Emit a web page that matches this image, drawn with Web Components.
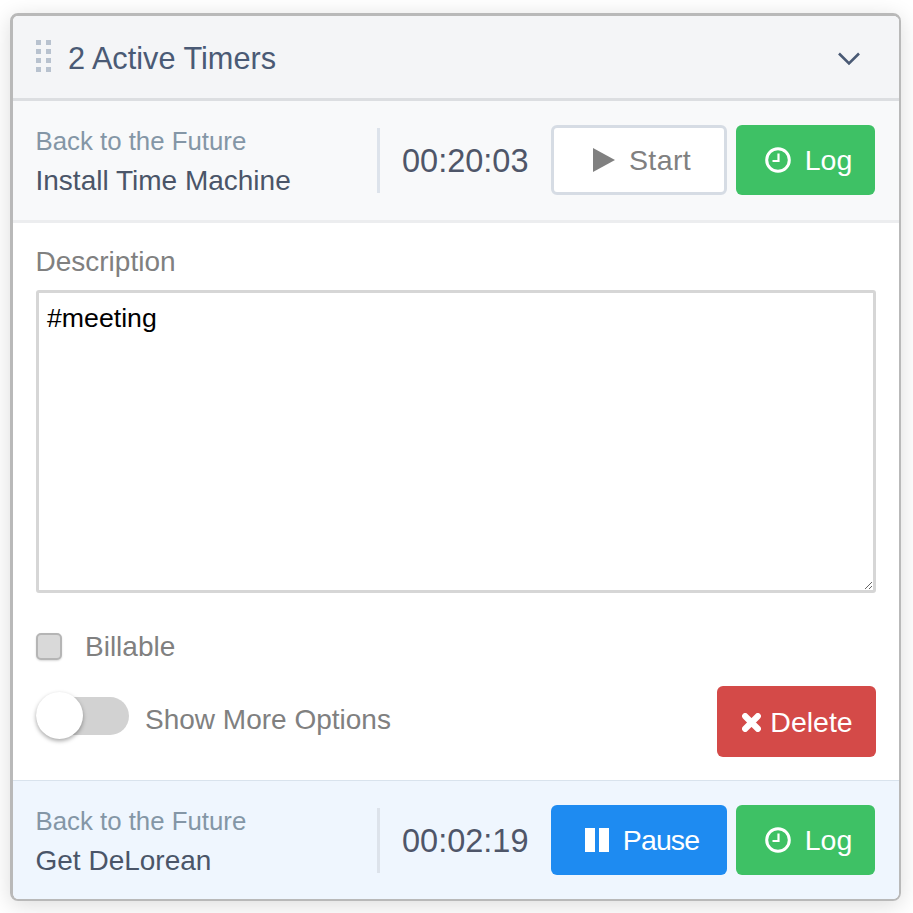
<!DOCTYPE html>
<html lang="en">
<head>
<meta charset="utf-8">
<title>Active Timers</title>
<style>
  html, body { margin: 0; background: #fff; }
  body { font-family: "Liberation Sans", Arial, sans-serif; min-height: 913px; }
</style>
</head>
<body>
<timer-panel title-text="2 Active Timers">
  <timer-row project="Back to the Future" task="Install Time Machine" time="00:20:03">
    <timer-button kind="outline" icon="play" slot="actions">Start</timer-button>
    <timer-button kind="green" icon="clock" slot="actions">Log</timer-button>
  </timer-row>
  <timer-details description="#meeting"></timer-details>
  <timer-row active project="Back to the Future" task="Get DeLorean" time="00:02:19">
    <timer-button kind="blue" icon="pause" slot="actions">Pause</timer-button>
    <timer-button kind="green" icon="clock" slot="actions">Log</timer-button>
  </timer-row>
</timer-panel>

<script>
const ICONOS = {
  play: `<svg width="22" height="24" viewBox="0 0 22 24"><path d="M0 0 L22 12 L0 24 Z" fill="currentColor"/></svg>`,
  pause: `<svg width="24" height="24" viewBox="0 0 24 24"><path d="M0 0h10v24H0zM14 0h10v24H14z" fill="currentColor"/></svg>`,
  clock: `<svg width="26" height="26" viewBox="0 0 26 26" fill="none" stroke="currentColor" stroke-width="3"><circle cx="13" cy="13" r="11.3"/><path d="M13.5 6.5v7.5H7.5" stroke-width="2.2"/></svg>`,
  cross: `<svg width="19" height="19" viewBox="0 0 19 19"><path d="M3.2 3.2 L15.8 15.8 M15.8 3.2 L3.2 15.8" stroke="currentColor" stroke-width="6.2" stroke-linecap="round" fill="none"/></svg>`,
};

class TimerButton extends HTMLElement {
  constructor() {
    super();
    this.attachShadow({ mode: "open" });
  }

  connectedCallback() {
    const icono = ICONOS[this.getAttribute("icon")] || "";
    this.shadowRoot.innerHTML = `
      <style>
        :host {
          display: inline-flex;
          box-sizing: border-box;
          height: 70px;
          align-items: center;
          justify-content: center;
          gap: var(--gap, 14px);
          border-radius: 6px;
          font-size: 28.5px;
          color: #fff;
        }
        :host([kind="green"]) { background: #3ec165; width: 139px; padding-left: 6px; }
        :host([kind="blue"]) { background: #1e8bf1; width: 176px; padding-left: 6px; letter-spacing: -0.9px; }
        :host([kind="outline"]) {
          background: #fff;
          width: 176px;
          padding-left: 6px;
          border: 3px solid #d6dce4;
          color: #808080;
          letter-spacing: 0.4px;
        }
        :host([kind="red"]) { background: #d44a48; width: 159px; height: 71px; padding: 1px 0 0 2px; --gap: 9px; }
        .icono { display: flex; }
      </style>
      <span class="icono">${icono}</span><slot></slot>
    `;
  }
}

class TimerRow extends HTMLElement {
  constructor() {
    super();
    this.attachShadow({ mode: "open" });
  }

  connectedCallback() {
    this.shadowRoot.innerHTML = `
      <style>
        :host {
          display: flex;
          box-sizing: border-box;
          height: 122px;
          align-items: center;
          padding: 0 24px 1px 23px;
          background: #f8f9fa;
          border-bottom: 3px solid #ecedef;
        }
        :host([active]) {
          height: 119px;
          padding-bottom: 0;
          background: #eff6fe;
          border-top: 1px solid #d9e3ed;
          border-bottom: 0;
        }
        .info {
          width: 344px;
          box-sizing: border-box;
          height: 65px;
          margin-top: 1px;
          border-right: 3px solid #dde3eb;
          display: flex;
          flex-direction: column;
          justify-content: space-between;
        }
        .proyecto { font-size: 25.8px; line-height: 28px; color: #8496a6; margin: -1px 0 0 -0.5px; }
        .tarea { font-size: 28px; line-height: 32px; color: #4a5568; margin: 0 0 -4px -0.5px; }
        .tiempo { padding: 2px 0 0 22px; font-size: 32.5px; color: #4f5669; width: 149px; }
        .acciones { display: flex; gap: 9px; }
      </style>
      <div class="info">
        <div class="proyecto">${this.getAttribute("project")}</div>
        <div class="tarea">${this.getAttribute("task")}</div>
      </div>
      <div class="tiempo">${this.getAttribute("time")}</div>
      <div class="acciones"><slot name="actions"></slot></div>
    `;
  }
}

class TimerDetails extends HTMLElement {
  constructor() {
    super();
    this.attachShadow({ mode: "open" });
  }

  connectedCallback() {
    this.shadowRoot.innerHTML = `
      <style>
        :host {
          display: block;
          box-sizing: border-box;
          height: 557px;
          padding: 23px 23px 0 23px;
          background: #fff;
          color: #808080;
          font-size: 28px;
        }
        .etiqueta { line-height: 32px; margin: 0 0 12px -0.5px; }
        .texto {
          box-sizing: border-box;
          height: 303px;
          padding: 9px 8px;
          border: 3px solid #d6d6d6;
          border-radius: 3px;
          color: #000;
          font-size: 26.7px;
          line-height: 32px;
          overflow: auto;
          resize: vertical;
        }
        .billable {
          display: flex;
          align-items: center;
          gap: 23px;
          margin-top: 38px;
          height: 30px;
        }
        .billable span:last-child { padding-top: 2px; }
        .check {
          box-sizing: border-box;
          width: 26px;
          height: 27px;
          background: #d9d9d9;
          border: 2px solid #b5b5b5;
          border-radius: 5px;
          box-shadow: 0 1px 2px rgba(0,0,0,.15);
        }
        .pie {
          display: flex;
          align-items: center;
          justify-content: space-between;
          margin-top: 25px;
        }
        .opciones { display: flex; align-items: center; gap: 16px; }
        .opciones span:last-child { margin-bottom: 4px; }
        .toggle {
          position: relative;
          width: 93px;
          height: 38px;
          margin-bottom: 12px;
          border-radius: 19px;
          background: #d2d2d2;
        }
        .toggle::after {
          content: "";
          position: absolute;
          left: 0;
          top: -5px;
          width: 47px;
          height: 47px;
          border-radius: 50%;
          background: #fff;
          box-shadow: 0 2px 4px rgba(0,0,0,.35);
        }
      </style>
      <div class="etiqueta">Description</div>
      <div class="texto">${this.getAttribute("description")}</div>
      <div class="billable"><span class="check"></span><span>Billable</span></div>
      <div class="pie">
        <div class="opciones"><span class="toggle"></span><span>Show More Options</span></div>
        <timer-button kind="red" icon="cross">Delete</timer-button>
      </div>
    `;
  }
}

class TimerPanel extends HTMLElement {
  constructor() {
    super();
    this.attachShadow({ mode: "open" });
  }

  connectedCallback() {
    this.shadowRoot.innerHTML = `
      <style>
        :host {
          display: block;
          box-sizing: border-box;
          width: 891px;
          height: 888px;
          margin: 13px 0 0 10px;
          border: solid #b9b9b9;
          border-width: 3px 2px 2px 3px;
          border-radius: 8px;
          overflow: hidden;
          box-shadow: 0 4px 22px rgba(0,0,0,.14);
        }
        header {
          display: flex;
          align-items: center;
          box-sizing: border-box;
          height: 85px;
          padding: 3px 38px 0 23px;
          background: #f4f5f7;
          border-bottom: 3px solid #dcdee1;
          color: #4a5a75;
          font-size: 30.7px;
        }
        .asa { display: flex; margin: 0 17px 5px 0; }
        h1 { flex: 1; margin: 0; font: inherit; }
      </style>
      <header>
        <svg class="asa" width="15" height="32" viewBox="0 0 15 32" fill="#b8c2cf">
          <path d="M0 0h5v5H0zM10 0h5v5h-5zM0 9h5v5H0zM10 9h5v5h-5zM0 18h5v5H0zM10 18h5v5h-5zM0 27h5v5H0zM10 27h5v5h-5z"/>
        </svg>
        <h1>${this.getAttribute("title-text")}</h1>
        <svg width="24" height="14" viewBox="0 0 24 14" fill="none" stroke="#4a5a75" stroke-width="2.6"><path d="M2 1.5 L12 11.5 L22 1.5"/></svg>
      </header>
      <slot></slot>
    `;
  }
}

customElements.define("timer-button", TimerButton);
customElements.define("timer-row", TimerRow);
customElements.define("timer-details", TimerDetails);
customElements.define("timer-panel", TimerPanel);
</script>
</body>
</html>
